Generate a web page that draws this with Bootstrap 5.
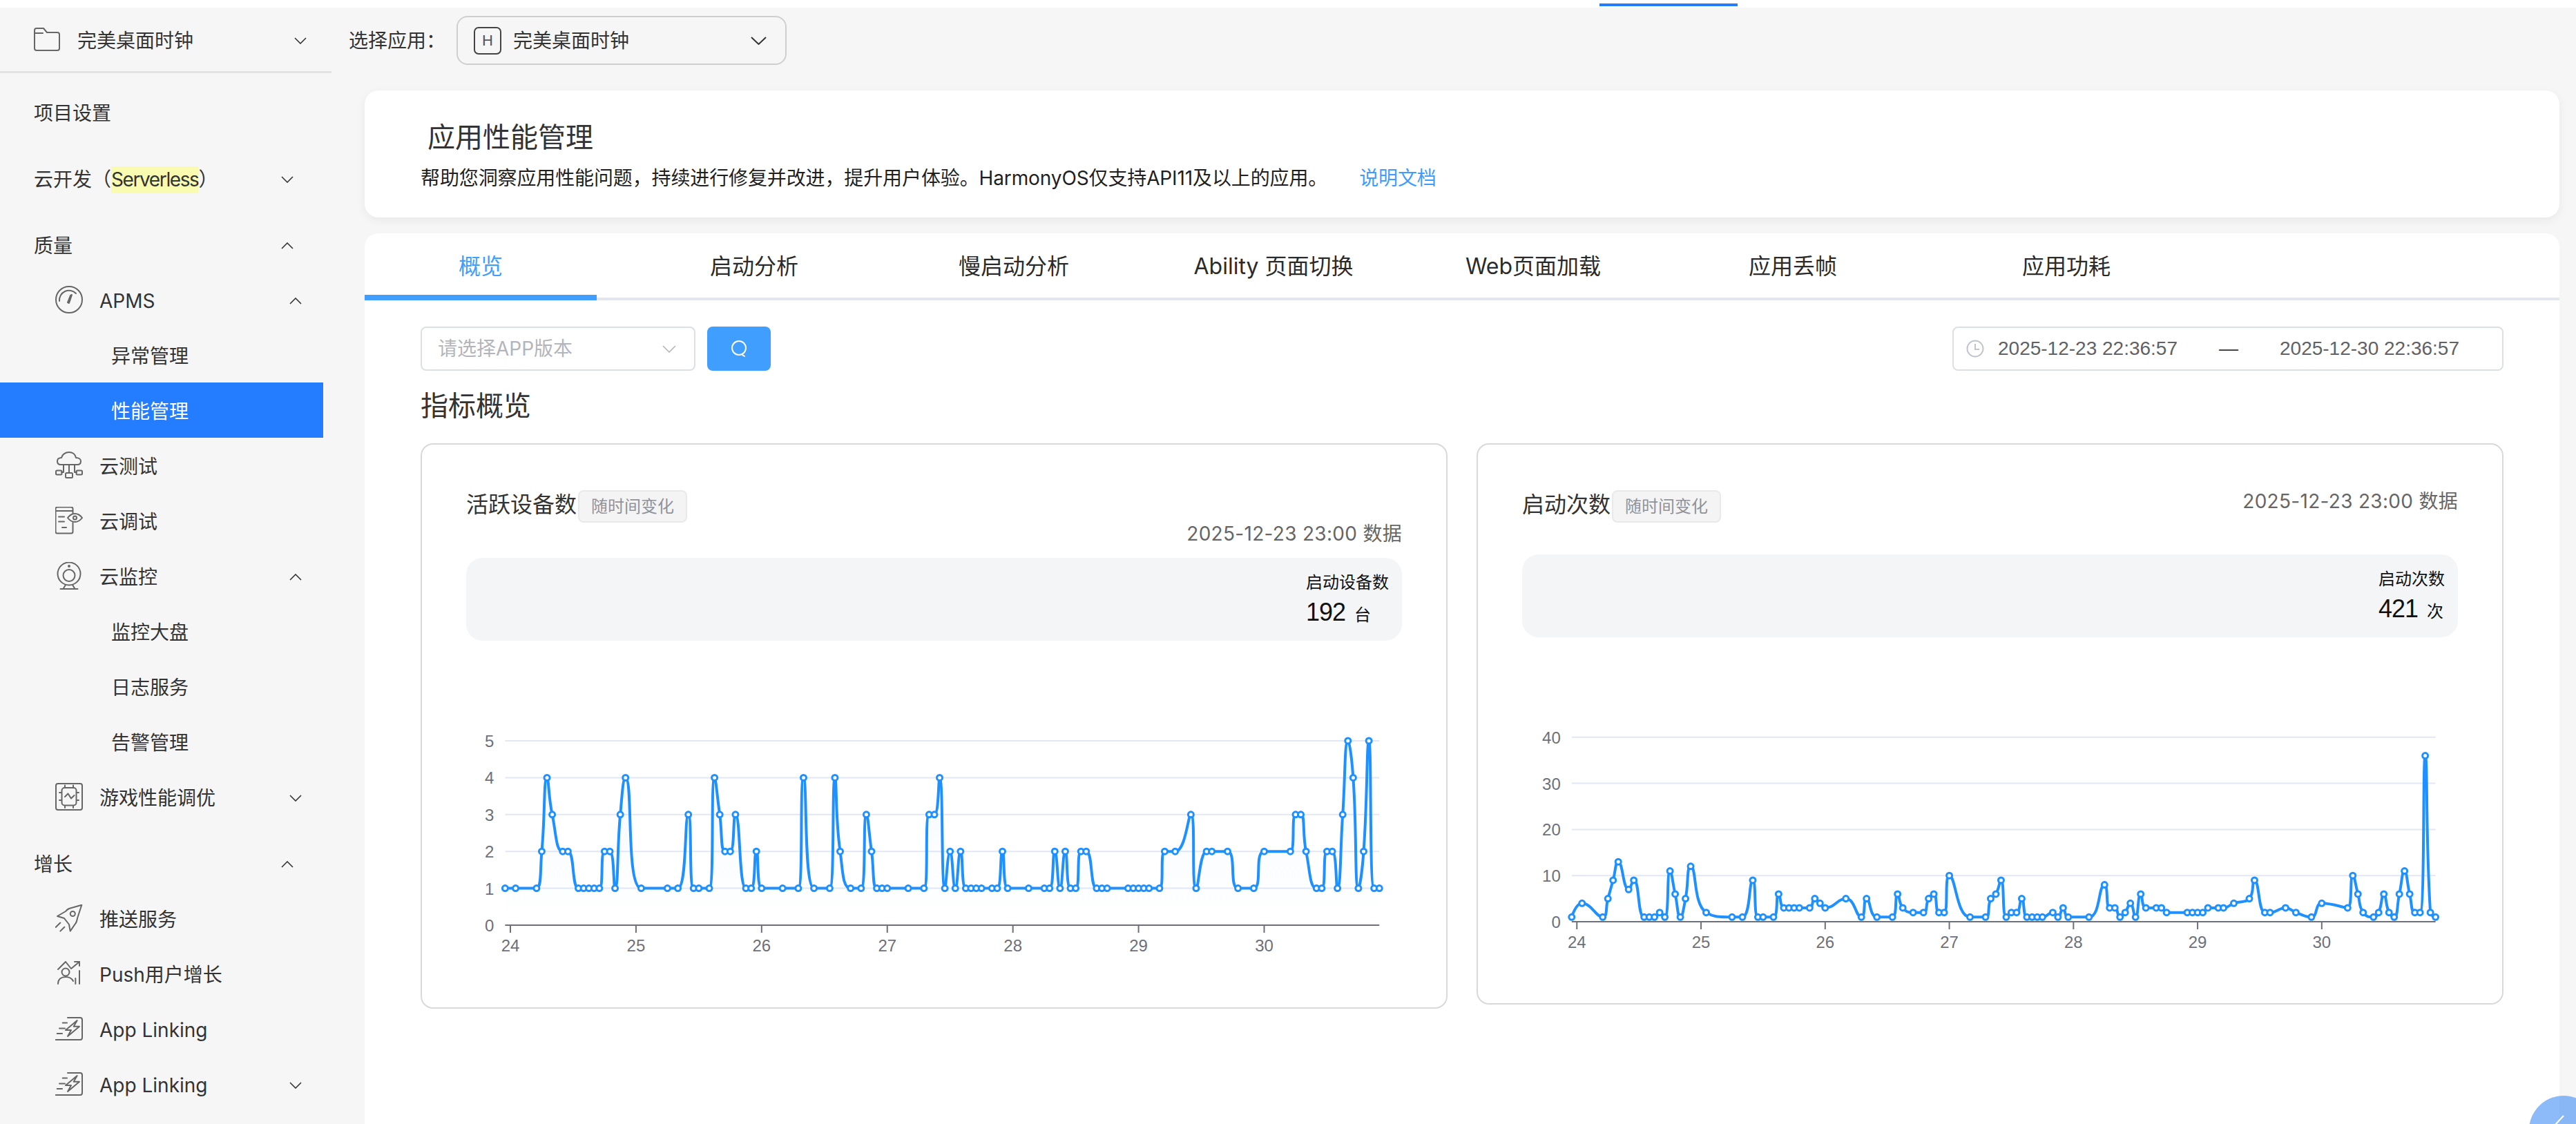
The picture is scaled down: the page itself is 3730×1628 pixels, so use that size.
<!DOCTYPE html>
<html lang="zh-CN">
<head>
<meta charset="utf-8">
<title>应用性能管理</title>
<link href="https://cdn.jsdelivr.net/npm/bootstrap@5.3.0/dist/css/bootstrap.min.css" rel="stylesheet">
<style>
:root{--ink:#333;--blue:#409eff;--line:#dcdfe6;}
html,body{height:1628px;overflow:hidden;}
body{background:#f6f6f6;color:var(--ink);font-family:"Inter","Noto Sans CJK SC",sans-serif;font-size:28px;line-height:40px;}
.top-strip{height:11px;background:#fff;position:relative;}
.strip-mark{position:absolute;left:2316px;width:200px;top:5px;height:4px;background:#247cff;}
.page-row{height:1617px;}
.side-col{width:480px;flex:none;}
.side-head{height:95px;border-bottom:3px solid #e2e2e2;padding:4px 36px 0 49px;gap:25px;}
.side-head>svg:first-child{margin-top:-4px;}
.side-nav{width:468px;padding-top:16px;}
.nv{height:80px;padding:4px 43px 0 49px;}
.nv-2{padding-left:80px;padding-right:31px;}
.nv-3{padding-left:161px;}
.nv-grp{margin-top:16px;}
.nv-on{background:#247cff;color:#fff;}
.nv-ico{width:40px;margin:-4px 24px 0 0;flex:none;display:block;}
.ico{fill:none;stroke:#666;stroke-width:2;stroke-linecap:round;stroke-linejoin:round;}
.chev{width:18px;height:10px;flex:none;fill:none;stroke:#333;stroke-width:1.6;}
.hl{background:#f8fbb0;display:inline-block;line-height:39px;letter-spacing:-1.4px;}
.main-col{min-width:0;flex:1;}
.app-bar{height:120px;padding:0 0 25px 25px;gap:16px;}
.app-select{width:478px;height:71px;border:2px solid #cfcfcf;border-radius:16px;padding:0 27px 0 23px;}
.h-box{width:40px;height:40px;border:2px solid #444;border-radius:7px;font:500 22px/36px "Liberation Sans",sans-serif;text-align:center;color:#555;margin-right:17px;}
.chev-lg{width:23px;height:12px;fill:none;stroke:#333;stroke-width:2;}
.info-card{margin:0 24px 23px 48px;height:184px;background:#fff;border-radius:20px;box-shadow:0 4px 14px rgba(0,0,0,.06);padding:44px 0 0 81px;}
.info-title{font-size:40px;line-height:48px;margin:0 0 15px 10px;font-weight:400;color:#333;}
.info-text{color:#1f1f1f;letter-spacing:-.12px;}
.doc-link{color:#3f9cff;text-decoration:none;margin-left:46px;}
.tab-card{margin:0 24px 0 48px;height:1290px;background:#fff;border-radius:20px 20px 0 0;}
.tab-row{height:97px;border-bottom:4px solid #e3e6ee;}
.tab-it{height:97px;width:376px;font-size:32px;line-height:96px;text-align:center;color:#2b2b2b;flex:none;}
.tab-first{width:336px;color:#409eff;border-bottom:8px solid #409eff;}
.tab-second{margin-left:40px;}
.tab-last{margin-left:20px;}
.tab-body{padding:38px 81px 0;}
.fld{height:64px;background:#fff;border:2px solid var(--line);border-radius:8px;}
.fld-sel{width:398px;padding:0 26px 0 23px;color:#b3b5bb;}
.fld-btn{width:92px;height:64px;background:var(--blue);border:0;border-radius:8px;margin-left:17px;padding:0;}
.fld-date{width:798px;padding:0 0 0 18px;color:#606266;font-family:"Liberation Sans",sans-serif;}
.date-a{margin-left:20px;}
.chev-gray{width:20px;height:11px;fill:none;stroke:#b3b5bb;stroke-width:1.6;}
.dash{width:148px;text-align:center;color:#333;}
.sec-title{font-size:40px;line-height:60px;margin:21px 0 24px;font-weight:400;color:#333;}
.chart-pair{gap:42px;}
.chart-card{flex:1;min-width:0;background:#fff;border:2px solid #d9d9d9;border-radius:18px;padding:66px 64px 0;}
.chart-name{font-size:32px;line-height:42px;color:#333;}
.chip-tag{height:47px;background:#f4f4f5;border:2px solid #e9e9eb;border-radius:8px;font-size:24px;line-height:43px;color:#909399;padding:0 17px;margin-left:2px;}
.when{line-height:32px;color:#666;white-space:nowrap;letter-spacing:.3px;}
.head-a{height:98px;}
.head-b{height:93px;}
.stat{height:120px;background:#f4f5f7;border-radius:24px;padding:20px 19px 0;}
.stat-box{width:fit-content;}
.stat-name{font-size:24px;line-height:32px;color:#111;}
.stat-num{font:36px/54px "Liberation Sans",sans-serif;letter-spacing:-1px;color:#111;}
.stat-unit{font:24px/54px "Noto Sans CJK SC",sans-serif;letter-spacing:0;margin-left:4px;}
.plot{display:block;width:100%;}
.plot text{font-family:"Liberation Sans",sans-serif;font-size:24px;fill:#6e7079;}
.fab{position:fixed;left:3662px;top:1587px;width:100px;height:100px;border-radius:50%;background:rgba(54,136,245,.57);}
.fab svg{position:absolute;left:36px;top:28px;}
</style>
</head>
<body>
<div class="top-strip"><span class="strip-mark"></span></div>
<div class="d-flex page-row">
  <aside class="side-col">
    <div class="side-head d-flex align-items-center">
      <svg width="38" height="34" viewBox="0 0 38 34" class="ico flex-none"><path d="M1 4a3 3 0 0 1 3-3h10l5 6h15a3 3 0 0 1 3 3v20a3 3 0 0 1-3 3H4a3 3 0 0 1-3-3z"/><path d="M1 8h12"/></svg>
      <span class="flex-grow-1">完美桌面时钟</span>
      <svg class="chev" viewBox="0 0 18 10"><path d="M1 1l8 8 8-8"/></svg>
    </div>
    <nav class="side-nav">
      <div class="nv d-flex align-items-center"><span>项目设置</span></div>
      <div class="nv nv-grp d-flex align-items-center justify-content-between"><span>云开发（<span class="hl">Serverless</span>）</span><svg class="chev" viewBox="0 0 18 10"><path d="M1 1l8 8 8-8"/></svg></div>
      <div class="nv nv-grp d-flex align-items-center justify-content-between"><span>质量</span><svg class="chev" viewBox="0 0 18 10"><path d="M1 9l8-8 8 8"/></svg></div>
      <div class="nv nv-2 d-flex align-items-center">
        <svg class="nv-ico ico" height="40" viewBox="0 0 40 40"><circle cx="20" cy="20" r="19"/><path d="M6 22a14 14 0 0 1 24-11"/><path d="M22 14l2-1-4 12-2-1z" fill="#666"/></svg>
        <span class="flex-grow-1">APMS</span><svg class="chev" viewBox="0 0 18 10"><path d="M1 9l8-8 8 8"/></svg>
      </div>
      <div class="nv nv-3 d-flex align-items-center">异常管理</div>
      <div class="nv nv-3 nv-on d-flex align-items-center">性能管理</div>
      <div class="nv nv-2 d-flex align-items-center">
        <svg class="nv-ico ico" height="40" viewBox="0 0 40 40"><path d="M8 19c-4 0-5-3-5-5 0-3 2-5 6-5 1-5 6-8 11-8s9 3 10 8c4 0 7 2 7 5s-2 5-5 5z"/><path d="M20 19v12M12 19v11H9M28 19v11h3"/><rect x="1" y="27.500" width="8.500" height="6" rx="1.500"/><rect x="15" y="31" width="10" height="7" rx="1.500"/><rect x="30.500" y="27.500" width="8.500" height="6" rx="1.500"/></svg>
        <span>云测试</span>
      </div>
      <div class="nv nv-2 d-flex align-items-center">
        <svg class="nv-ico ico" height="40" viewBox="0 0 40 40"><path d="M25.500 10V3a2.500 2.500 0 0 0-2.500-2.500H3A2.500 2.500 0 0 0 .5 3v33A2.500 2.500 0 0 0 3 38.500h20a2.500 2.500 0 0 0 2.500-2.500V23"/><path d="M1 6h24M5 14.500h8M5 21.500h8M10 30h6"/><path d="M18 16c3-4 6-6 10.500-6S36 12 39 16c-3 4-6 6-10.500 6S21 20 18 16z"/><circle cx="28.500" cy="16" r="2.500"/></svg>
        <span>云调试</span>
      </div>
      <div class="nv nv-2 d-flex align-items-center justify-content-between">
        <div class="d-flex align-items-center"><svg class="nv-ico ico" height="40" viewBox="0 0 40 40"><circle cx="20" cy="17" r="16.500"/><circle cx="20" cy="19.500" r="8.500"/><circle cx="20" cy="6" r="1" fill="#666"/><path d="M15 33l-3.500 6M25 33l3.500 6M7.500 39h25"/></svg><span>云监控</span></div>
        <svg class="chev" viewBox="0 0 18 10"><path d="M1 9l8-8 8 8"/></svg>
      </div>
      <div class="nv nv-3 d-flex align-items-center">监控大盘</div>
      <div class="nv nv-3 d-flex align-items-center">日志服务</div>
      <div class="nv nv-3 d-flex align-items-center">告警管理</div>
      <div class="nv nv-2 d-flex align-items-center justify-content-between">
        <div class="d-flex align-items-center"><svg class="nv-ico ico" height="40" viewBox="0 0 40 40"><rect x="1" y="1" width="38" height="38" rx="3"/><rect x="9.500" y="7" width="21" height="25.500" rx="4"/><path d="M14 6V3.500M26 6V3.500M14 36v-3M26 36v-3M6 14h3M6 25h3M31 14h3M31 25h3"/><path d="M14 20l4.500-4.500 4.500 7 4.500-4.500"/></svg><span>游戏性能调优</span></div>
        <svg class="chev" viewBox="0 0 18 10"><path d="M1 1l8 8 8-8"/></svg>
      </div>
      <div class="nv nv-grp d-flex align-items-center justify-content-between"><span>增长</span><svg class="chev" viewBox="0 0 18 10"><path d="M1 9l8-8 8 8"/></svg></div>
      <div class="nv nv-2 d-flex align-items-center">
        <svg class="nv-ico ico" height="40" viewBox="0 0 40 40"><path d="M38.300.7L20 6q-3 1.500-5 4L3 17l10 3 7 9 1.700 9.600L29 28q2-2 3-8z"/><circle cx="25.300" cy="13.500" r="3.500"/><path d="M.7 33l6.600-6.500M7.300 38.600l6-5.900"/></svg>
        <span>推送服务</span>
      </div>
      <div class="nv nv-2 d-flex align-items-center">
        <svg class="nv-ico ico" height="40" viewBox="0 0 40 40"><circle cx="15" cy="18" r="5.500"/><path d="M4 35c0-7 5-10 11-10 5 0 9 2 11 6"/><path d="M4 14L15 3l8 10L35 3"/><path d="M28 3h7v6"/><path d="M29.300 27v8M35 16v19"/></svg>
        <span>Push用户增长</span>
      </div>
      <div class="nv nv-2 d-flex align-items-center">
        <svg class="nv-ico ico" height="34" viewBox="0 0 40 34"><path d="M18 1h18a3 3 0 0 1 3 3v26a3 3 0 0 1-3 3H.7"/><path d="M31.700 5L15 19h8l-5 9 17-14.200h-8.300z"/><path d="M10.700 8.600H17M6 16.500h8M2.700 24H10"/></svg>
        <span>App Linking</span>
      </div>
      <div class="nv nv-2 d-flex align-items-center justify-content-between">
        <div class="d-flex align-items-center"><svg class="nv-ico ico" height="34" viewBox="0 0 40 34"><path d="M18 1h18a3 3 0 0 1 3 3v26a3 3 0 0 1-3 3H.7"/><path d="M31.700 5L15 19h8l-5 9 17-14.200h-8.300z"/><path d="M10.700 8.600H17M6 16.500h8M2.700 24H10"/></svg><span>App Linking</span></div>
        <svg class="chev" viewBox="0 0 18 10"><path d="M1 1l8 8 8-8"/></svg>
      </div>
    </nav>
  </aside>
  <main class="main-col">
    <div class="app-bar d-flex align-items-center">
      <span>选择应用：</span>
      <div class="app-select d-flex align-items-center">
        <span class="h-box flex-none">H</span>
        <span class="flex-grow-1">完美桌面时钟</span>
        <svg class="chev-lg" viewBox="0 0 23 12"><path d="M1 1l10.500 10L22 1"/></svg>
      </div>
    </div>
    <section class="info-card">
      <h1 class="info-title">应用性能管理</h1>
      <div class="info-text">帮助您洞察应用性能问题，持续进行修复并改进，提升用户体验。HarmonyOS仅支持API11及以上的应用。<a class="doc-link" href="#">说明文档</a></div>
    </section>
    <section class="tab-card">
      <div class="tab-row d-flex">
        <div class="tab-it tab-first">概览</div>
        <div class="tab-it tab-second">启动分析</div>
        <div class="tab-it">慢启动分析</div>
        <div class="tab-it">Ability 页面切换</div>
        <div class="tab-it">Web页面加载</div>
        <div class="tab-it">应用丢帧</div>
        <div class="tab-it tab-last">应用功耗</div>
      </div>
      <div class="tab-body">
        <div class="d-flex align-items-center">
          <div class="fld fld-sel d-flex align-items-center justify-content-between"><span>请选择APP版本</span><svg class="chev-gray" viewBox="0 0 20 11"><path d="M1 1l9 9 9-9"/></svg></div>
          <button class="fld-btn d-flex align-items-center justify-content-center" type="button" aria-label="搜索"><svg width="26" height="26" viewBox="0 0 26 26" fill="none" stroke="#fff" stroke-width="2" stroke-linecap="round"><circle cx="13" cy="12" r="10"/><path d="M18 22l3 2"/></svg></button>
          <div class="fld fld-date ms-auto d-flex align-items-center">
            <svg width="26" height="26" viewBox="0 0 26 26" fill="none" stroke="#c0c4cc" stroke-width="2"><circle cx="13" cy="13" r="11.500"/><path d="M13 6v8h6"/></svg>
            <span class="date-a">2025-12-23 22:36:57</span><span class="dash">—</span><span>2025-12-30 22:36:57</span>
          </div>
        </div>
        <h2 class="sec-title">指标概览</h2>
        <div class="d-flex align-items-start chart-pair">
          <article class="chart-card">
            <div class="head-a">
              <div class="d-flex align-items-start"><span class="chart-name">活跃设备数</span><span class="chip-tag">随时间变化</span></div>
              <div class="when text-end">2025-12-23 23:00 数据</div>
            </div>
            <div class="stat"><div class="ms-auto stat-box"><div class="stat-name">启动设备数</div><div class="stat-num">192 <span class="stat-unit">台</span></div></div></div>
            <svg class="plot" id="plotA" height="531" viewBox="0 0 1355 531"></svg>
          </article>
          <article class="chart-card">
            <div class="head-b d-flex justify-content-between align-items-start">
              <div class="d-flex align-items-start"><span class="chart-name">启动次数</span><span class="chip-tag">随时间变化</span></div>
              <div class="when">2025-12-23 23:00 数据</div>
            </div>
            <div class="stat"><div class="ms-auto stat-box"><div class="stat-name">启动次数</div><div class="stat-num">421 <span class="stat-unit">次</span></div></div></div>
            <svg class="plot" id="plotB" height="530" viewBox="0 0 1355 530"></svg>
          </article>
        </div>
      </div>
    </section>
  </main>
</div>
<div class="fab"><svg width="16" height="16" viewBox="0 0 16 16" fill="none" stroke="#fff" stroke-width="2"><path d="M2 14L14 1"/></svg></div>
<script src="https://cdn.jsdelivr.net/npm/bootstrap@5.3.0/dist/js/bootstrap.bundle.min.js"></script>
<script>
var dataA=[[0,1],[2,1],[6,1],[7,2],[8,4],[9,3],[11,2],[12,2],[14,1],[15,1],[16,1],[17,1],[18,1],[19,2],[20,2],[21,1],[22,3],[23,4],[26,1],[31,1],[33,1],[35,3],[36,1],[37,1],[39,1],[40,4],[41,3],[42,2],[43,2],[44,3],[46,1],[47,1],[48,2],[49,1],[53,1],[56,1],[57,4],[59,1],[62,1],[63,4],[64,2],[66,1],[68,1],[69,3],[70,2],[71,1],[72,1],[73,1],[77,1],[80,1],[81,3],[82,3],[83,4],[84,1],[85,2],[86,1],[87,2],[88,1],[89,1],[90,1],[91,1],[93,1],[94,1],[95,2],[96,1],[100,1],[103,1],[104,1],[105,2],[106,1],[107,2],[108,1],[109,1],[110,2],[111,2],[113,1],[114,1],[115,1],[119,1],[120,1],[121,1],[122,1],[123,1],[125,1],[126,2],[128,2],[131,3],[132,1],[134,2],[135,2],[138,2],[140,1],[143,1],[145,2],[150,2],[151,3],[152,3],[153,2],[155,1],[156,1],[157,2],[158,2],[159,1],[160,3],[161,5],[162,4],[163,1],[164,2],[165,5],[166,1],[167,1]];
var dataB=[[0,1],[2,4],[6,1],[7,5],[8,9],[9,13],[11,7],[12,9],[14,1],[15,1],[16,1],[17,2],[18,1],[19,11],[20,6],[21,1],[22,5],[23,12],[26,2],[31,1],[33,1],[35,9],[36,1],[37,1],[39,1],[40,6],[41,3],[42,3],[43,3],[44,3],[46,3],[47,5],[48,4],[49,3],[53,5],[56,1],[57,5],[59,1],[62,1],[63,6],[64,3],[66,2],[68,2],[69,5],[70,6],[71,2],[72,2],[73,10],[77,1],[80,1],[81,5],[82,6],[83,9],[84,1],[85,2],[86,2],[87,5],[88,1],[89,1],[90,1],[91,1],[93,2],[94,1],[95,3],[96,1],[100,1],[103,8],[104,3],[105,3],[106,1],[107,2],[108,4],[109,1],[110,6],[111,3],[113,3],[114,3],[115,2],[119,2],[120,2],[121,2],[122,2],[123,3],[125,3],[126,3],[128,4],[131,5],[132,9],[134,2],[135,2],[138,3],[140,2],[143,1],[145,4],[150,3],[151,10],[152,6],[153,2],[155,1],[156,2],[157,6],[158,2],[159,1],[160,6],[161,11],[162,6],[163,2],[164,2],[165,36],[166,2],[167,1]];
function smooth(p,s){
  var d='M'+p[0][0]+' '+p[0][1],c0=p[0][0],c1=p[0][1];
  for(var i=1;i<p.length;i++){
    var x=p[i][0],y=p[i][1],a=p[i-1][0],b=p[i-1][1];
    if(i===p.length-1){d+='C'+c0+' '+c1+' '+x+' '+y+' '+x+' '+y;break;}
    var n=p[i+1][0],m=p[i+1][1];
    var lp=Math.hypot(x-a,y-b),ln=Math.hypot(n-x,m-y),r=ln/(ln+lp);
    var nx=x+(n-a)*s*r,ny=y+(m-b)*s*r;
    nx=Math.max(Math.min(nx,Math.max(n,x)),Math.min(n,x));
    ny=Math.max(Math.min(ny,Math.max(m,y)),Math.min(m,y));
    var cx=x-(nx-x)*lp/ln,cy=y-(ny-y)*lp/ln;
    cx=Math.max(Math.min(cx,Math.max(a,x)),Math.min(a,x));
    cy=Math.max(Math.min(cy,Math.max(b,y)),Math.min(b,y));
    nx=x+(x-cx)*ln/lp;ny=y+(y-cy)*ln/lp;
    d+='C'+c0+' '+c1+' '+cx+' '+cy+' '+x+' '+y;
    c0=nx;c1=ny;
  }
  return d;
}
function draw(id,data,o){
  var h='<defs><linearGradient id="'+id+'G" x1="0" y1="0" x2="0" y2="1"><stop offset="0" stop-color="#1e90ff" stop-opacity=".05"/><stop offset="1" stop-color="#1e90ff" stop-opacity="0"/></linearGradient></defs>';
  var end=o.x0+167*o.step;
  o.ticks.forEach(function(v){
    var y=o.base-v*o.unit;
    if(v>0)h+='<line x1="'+o.x0+'" x2="'+end+'" y1="'+y+'" y2="'+y+'" stroke="#e3e7f3" stroke-width="2"/>';
    h+='<text x="'+(o.x0-16)+'" y="'+(y+9)+'" text-anchor="end">'+v+'</text>';
  });
  h+='<line x1="'+o.x0+'" x2="'+end+'" y1="'+o.base+'" y2="'+o.base+'" stroke="#6e7079" stroke-width="2"/>';
  for(var k=0;k<7;k++){
    var tx=o.x0+o.step*(1+24*k);
    h+='<line x1="'+tx+'" x2="'+tx+'" y1="'+o.base+'" y2="'+(o.base+11)+'" stroke="#6e7079" stroke-width="2"/>';
    h+='<text x="'+tx+'" y="'+(o.base+38)+'" text-anchor="middle">'+(24+k)+'</text>';
  }
  var p=data.map(function(q){return [+(o.x0+q[0]*o.step).toFixed(2),+(o.base-q[1]*o.unit).toFixed(2)];});
  var line=smooth(p,.5);
  h+='<path d="'+line+'L'+p[p.length-1][0]+' '+o.base+'L'+p[0][0]+' '+o.base+'Z" fill="url(#'+id+'G)"/>';
  h+='<path d="'+line+'" fill="none" stroke="#1e90ff" stroke-width="4"/>';
  p.forEach(function(q){h+='<circle cx="'+q[0]+'" cy="'+q[1]+'" r="4" fill="#fff" stroke="#1e90ff" stroke-width="3"/>';});
  document.getElementById(id).innerHTML=h;
}
draw('plotA',dataA,{x0:56.4,step:7.58,base:412,unit:53.4,ticks:[0,1,2,3,4,5]});
draw('plotB',dataB,{x0:71.8,step:7.49,base:412,unit:6.68,ticks:[0,10,20,30,40]});
</script>
</body>
</html>
